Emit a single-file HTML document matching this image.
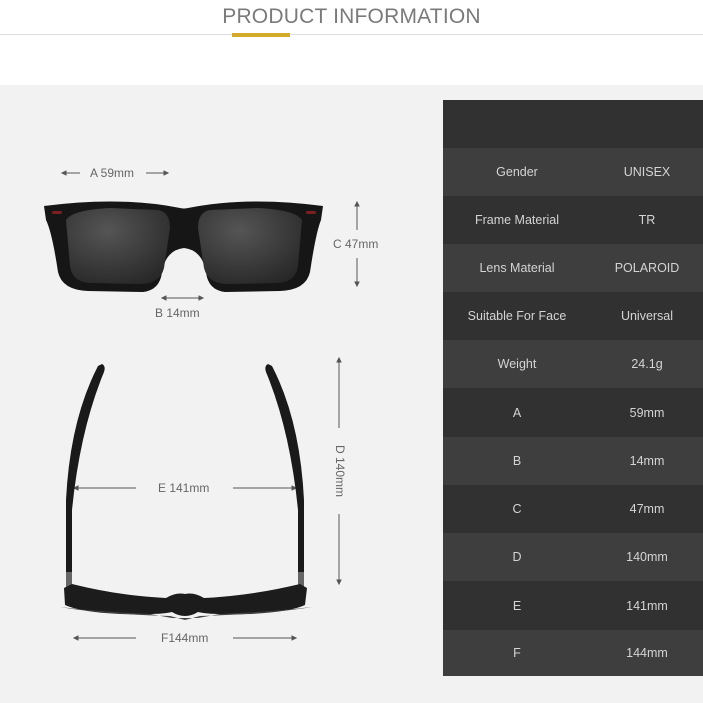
<!DOCTYPE html>
<html><head><style>
*{margin:0;padding:0;box-sizing:border-box}
body{width:703px;height:703px;background:#fff;position:relative;overflow:hidden;font-family:"Liberation Sans",sans-serif}
.title{position:absolute;top:5px;left:0;width:703px;text-align:center;font-size:21px;color:#7a7a7a;letter-spacing:0.2px}
.line{position:absolute;top:34px;left:0;width:703px;height:1px;background:#ddd}
.gold{position:absolute;top:33px;left:232px;width:58px;height:4px;background:#d4aa2a}
.gray{position:absolute;top:85px;left:0;width:703px;height:618px;background:#f2f2f2}
.tbl{position:absolute;left:443px;top:100px;width:260px}
.r{height:48px;display:flex;align-items:center;color:#d4d4d4;font-size:12.5px}
.r span{display:block;text-align:center}
.r span:first-child{width:148px}
.r span:last-child{width:112px}
.d{background:#313131}.l{background:#3e3e3e}
.lbl{position:absolute;font-size:12px;color:#666}
</style></head><body>
<div class="title">PRODUCT INFORMATION</div>
<div class="line"></div><div class="gold"></div>
<div class="gray"></div>
<div class="tbl">
<div class="r d"></div>
<div class="r l"><span>Gender</span><span>UNISEX</span></div>
<div class="r d"><span>Frame Material</span><span>TR</span></div>
<div class="r l"><span>Lens Material</span><span>POLAROID</span></div>
<div class="r d"><span>Suitable For Face</span><span>Universal</span></div>
<div class="r l"><span>Weight</span><span>24.1g</span></div>
<div class="r d" style="height:49px"><span>A</span><span>59mm</span></div>
<div class="r l"><span>B</span><span>14mm</span></div>
<div class="r d"><span>C</span><span>47mm</span></div>
<div class="r l"><span>D</span><span>140mm</span></div>
<div class="r d" style="height:49px"><span>E</span><span>141mm</span></div>
<div class="r l" style="height:46px"><span>F</span><span>144mm</span></div>
</div>
<svg style="position:absolute;left:0;top:0" width="440" height="703">
<defs>
<radialGradient id="lg" cx="0.4" cy="0.3" r="0.8"><stop offset="0" stop-color="#555"/><stop offset="1" stop-color="#262626"/></radialGradient>
</defs>
<g stroke="#555" stroke-width="1" fill="#555">
<line x1="62" y1="173" x2="80" y2="173"/><path d="M62 173l4-2v4z"/>
<line x1="146" y1="173" x2="168" y2="173"/><path d="M168 173l-4-2v4z"/>
<line x1="162" y1="298" x2="203" y2="298"/><path d="M162 298l4-2v4zM203 298l-4-2v4z"/>
<line x1="357" y1="202" x2="357" y2="230"/><path d="M357 202l-2 4h4z"/>
<line x1="357" y1="258" x2="357" y2="286"/><path d="M357 286l-2-4h4z"/>
<line x1="339" y1="358" x2="339" y2="428"/><path d="M339 358l-2 4h4z"/>
<line x1="339" y1="514" x2="339" y2="584"/><path d="M339 584l-2-4h4z"/>
<line x1="74" y1="488" x2="136" y2="488"/><path d="M74 488l4-2v4z"/>
<line x1="233" y1="488" x2="296" y2="488"/><path d="M296 488l-4-2v4z"/>
<line x1="74" y1="638" x2="136" y2="638"/><path d="M74 638l4-2v4z"/>
<line x1="233" y1="638" x2="296" y2="638"/><path d="M296 638l-4-2v4z"/>
</g>
<!-- front glasses -->
<path d="M44 206 Q120 196 180 208 Q184 209 188 208 Q248 196 323 206 L321 220 Q316 232 310 272 Q306 290 280 291 L225 292 Q208 290 206 272 Q202 250 184 248 Q166 250 162 272 Q160 290 143 292 L88 291 Q62 290 58 272 Q52 232 46 220Z" fill="#161616"/>
<path d="M66 220 Q72 210 110 208 L158 210 Q170 212 170 228 L164 268 Q160 284 140 284 L90 283 Q72 282 70 266Z" fill="url(#lg)"/>
<path d="M302 220 Q296 210 258 208 L210 210 Q198 212 198 228 L204 268 Q208 284 228 284 L278 283 Q296 282 298 266Z" fill="url(#lg)"/>
<rect x="52" y="211" width="10" height="3" rx="1.5" fill="#7a2020"/><rect x="306" y="211" width="10" height="3" rx="1.5" fill="#7a2020"/>
<!-- top view -->
<path d="M102 364 Q106 366 104 372 Q80 430 72 510 L72 573 L66 573 L66 500 Q70 420 98 366Z" fill="#1a1a1a"/>
<path d="M268 364 Q264 366 266 372 Q290 430 298 510 L298 573 L304 573 L304 500 Q300 420 272 366Z" fill="#1a1a1a"/>
<rect x="66" y="572" width="6" height="22" fill="#666"/><rect x="298" y="572" width="6" height="22" fill="#666"/>
<path d="M64 588 L72 584 Q120 596 166 598 Q176 592 185 594 Q194 592 204 598 Q250 596 300 584 L307 588 L305 605 Q290 612 250 614 Q210 615 198 612 Q185 620 172 612 Q160 615 120 614 Q80 612 65 605Z" fill="#1c1c1c"/>
<path d="M60 607 Q100 612 150 614 L172 618 L198 618 L220 614 Q270 612 312 607 Q270 614 200 616 L185 620 L170 616 Q100 614 60 607Z" fill="#444"/>
</svg>
<div class="lbl" style="left:90px;top:166px">A 59mm</div>
<div class="lbl" style="left:155px;top:306px">B 14mm</div>
<div class="lbl" style="left:333px;top:237px">C 47mm</div>
<div class="lbl" style="left:158px;top:481px">E 141mm</div>
<div class="lbl" style="left:161px;top:631px">F144mm</div>
<div class="lbl" style="left:310px;top:464px;transform:rotate(90deg);width:60px;text-align:center">D 140mm</div>
</body></html>
